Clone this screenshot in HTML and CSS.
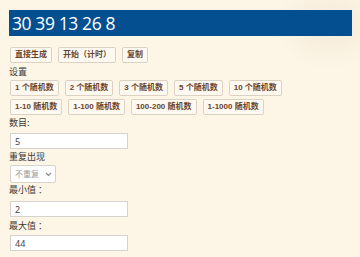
FILE: index.html
```html
<!DOCTYPE html>
<html lang="zh">
<head>
<meta charset="utf-8">
<title>随机数生成器</title>
<link rel="stylesheet" href="styles.css">
</head>
<body>
<div class="result">30 39 13 26 8</div>
<div class="actions">
  <button class="btn">直接生成</button>
  <button class="btn">开始（计时）</button>
  <button class="btn">复制</button>
</div>
<div class="label label-settings">设置</div>
<div class="presets">
  <button class="btn">1 个随机数</button>
  <button class="btn">2 个随机数</button>
  <button class="btn">3 个随机数</button>
  <button class="btn">5 个随机数</button>
  <button class="btn">10 个随机数</button>
</div>
<div class="presets presets-2">
  <button class="btn">1-10 随机数</button>
  <button class="btn">1-100 随机数</button>
  <button class="btn">100-200 随机数</button>
  <button class="btn">1-1000 随机数</button>
</div>
<div class="label label-count">数目:</div>
<input class="field field-count" type="text" value="5">
<div class="label label-repeat">重复出现</div>
<div class="select-wrap">
  <select class="select"><option>不重复</option></select>
  <svg class="chev" width="7" height="5" viewBox="0 0 7 5"><path d="M1 1 L3.5 3.5 L6 1" fill="none" stroke="#888" stroke-width="1.1"/></svg>
</div>
<div class="label label-min">最小值 ：</div>
<input class="field field-min" type="text" value="2">
<div class="label label-max">最大值 ：</div>
<input class="field field-max" type="text" value="44">
</body>
</html>
```
FILE: styles.css
```css
html, body {
  margin: 0;
  padding: 0;
}
body {
  background-color: #fdf5e6;
  background-image: radial-gradient(ellipse 60px 45px at 330px 25px, rgba(210, 195, 170, 0.22), rgba(210, 195, 170, 0) 100%);
  background-repeat: no-repeat;
  padding: 10px 8px 0 9px;
  height: 257px;
  box-sizing: border-box;
  overflow: hidden;
  font-family: "Noto Sans CJK SC", "Noto Sans", sans-serif;
  color: #333;
}
.result {
  width: 343px;
  height: 26px;
  box-sizing: border-box;
  background: #034f8f;
  color: #fff;
  font-family: "Open Sans", "Noto Sans", sans-serif;
  font-size: 17.5px;
  line-height: 26px;
  padding-left: 3px;
  letter-spacing: -0.4px;
}
.actions {
  display: flex;
  gap: 6px;
  margin-top: 11px;
  margin-left: 1px;
}
.presets {
  display: flex;
  gap: 6px;
  margin-top: 1px;
  margin-left: 1px;
}
.presets-2 {
  margin-top: 3px;
}
.btn {
  height: 16px;
  box-sizing: border-box;
  padding: 0 4px;
  border: 1px solid #dcd2c4;
  border-radius: 2px;
  background: #fdf9f1;
  color: #6b4329;
  font-family: "Liberation Sans", "Noto Sans CJK SC", sans-serif;
  font-size: 8px;
  font-weight: bold;
  line-height: 14px;
  white-space: nowrap;
  cursor: pointer;
}
.label {
  font-size: 9px;
  line-height: 14px;
  height: 14px;
  color: #3a3a3a;
}
.label-settings { margin-top: 2px; }
.label-count { margin-top: 1px; }
.label-repeat { margin-top: 1px; }
.label-min { margin-top: 0; }
.label-max { margin-top: 2px; }
.field {
  display: block;
  width: 118px;
  height: 16px;
  box-sizing: border-box;
  margin: 3px 0 0 1px;
  padding: 0 0 0 4px;
  border: 1px solid #d6d2cc;
  background: #fff;
  font-family: "Noto Sans", sans-serif;
  font-size: 9px;
  color: #444;
  outline: none;
}
.field-min { margin-top: 4px; }
.field-max { margin-top: 2px; }
.select-wrap {
  position: relative;
  width: 46px;
  height: 18px;
  margin: 1px 0 0 1px;
}
.select {
  display: block;
  appearance: none;
  -webkit-appearance: none;
  width: 46px;
  height: 18px;
  box-sizing: border-box;
  border: 1px solid #d6d2cc;
  border-radius: 2px;
  background: #fff;
  padding: 0 0 0 4px;
  padding-right: 0;
  margin: 0;
  font-family: "Noto Sans CJK SC", sans-serif;
  font-size: 8px;
  line-height: 16px;
  color: #9a9a9a;
  text-overflow: clip;
}
.chev {
  position: absolute;
  right: 4px;
  top: 7px;
  pointer-events: none;
}
```
